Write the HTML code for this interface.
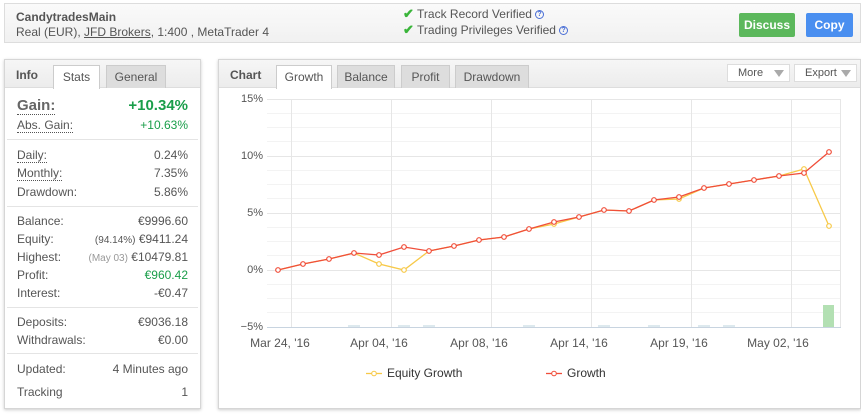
<!DOCTYPE html>
<html><head><meta charset="utf-8"><style>
*{box-sizing:border-box;margin:0;padding:0}
body{width:861px;height:415px;background:#fff;font-family:"Liberation Sans",sans-serif;font-size:12px;color:#555;position:relative;overflow:hidden}
.abs{position:absolute}
.hdr{left:4px;top:3px;width:857px;height:40px;border:1px solid #ddd;background:linear-gradient(#fafafa,#f1f1f1)}
.btn{position:absolute;top:9px;height:24px;color:#fff;font-weight:bold;font-size:12px;line-height:24px;text-align:center;border-radius:2px}
.panel{border:1px solid #d6d6d6;background:#fff;box-shadow:0 1px 3px #ccc}
.ph{height:28px;background:linear-gradient(#f6f6f6,#ececec);border-bottom:1px solid #ddd;position:relative}
.tab{position:absolute;top:5px;height:23px;line-height:22px;text-align:center;font-size:12px;color:#555;background:#ddd;border:1px solid #ccc;border-bottom:none}
.tab.on{background:#fff;height:24px}
.row{position:absolute;left:17px;width:171px;font-size:12px;color:#555;display:flex;justify-content:space-between}
.dot{border-bottom:1px dotted #555}
.sep{position:absolute;left:7px;width:191px;border-top:1px solid #e4e4e4}
.dd{position:absolute;top:4px;height:18px;background:#fff;border:1px solid #ddd;font-size:11px;line-height:16px;padding-left:10px;color:#555}
.dd:after{content:"";position:absolute;right:5px;top:5px;border:5px solid transparent;border-top:7px solid #aaa;border-bottom:none}
.yl{position:absolute;right:598px;font-size:11px;color:#555}
.xl{position:absolute;top:336px;font-size:12px;color:#555;width:80px;text-align:center}
.q{display:inline-block;width:9px;height:9px;border:1px solid #4a6fd6;border-radius:50%;color:#4a6fd6;font-size:7px;line-height:7px;text-align:center;font-weight:bold;vertical-align:middle;margin-left:3px}
.ck{color:#3ab53a;font-weight:bold;font-size:13px}
</style></head><body>
<div class="abs hdr">
 <div class="abs" style="left:11px;top:6px;font-size:12px;font-weight:bold;color:#555">CandytradesMain</div>
 <div class="abs" style="left:11px;top:21px;font-size:12px;color:#555">Real (EUR), <span style="text-decoration:underline">JFD Brokers</span>, 1:400 , MetaTrader 4</div>
 <div class="abs" style="left:398px;top:2px;font-size:12px;color:#555"><span class="ck">✔</span> Track Record Verified<span class="q">?</span></div>
 <div class="abs" style="left:398px;top:18px;font-size:12px;color:#555"><span class="ck">✔</span> Trading Privileges Verified<span class="q">?</span></div>
 <div class="btn" style="left:734px;width:56px;background:#5cb85c">Discuss</div>
 <div class="btn" style="left:801px;width:47px;background:#4a8ff0">Copy</div>
</div>

<div class="abs panel" style="left:4px;top:59px;width:197px;height:350px">
 <div class="ph">
  <div class="abs" style="left:11px;top:8px;font-weight:bold;font-size:12px;color:#555">Info</div>
  <div class="tab on" style="left:48px;width:47px">Stats</div>
  <div class="tab" style="left:101px;width:60px">General</div>
 </div>
</div>
<div class="row" style="top:97px;font-size:15px;font-weight:bold"><span class="dot" style="color:#666">Gain:</span><span style="color:#1a9e4a">+10.34%</span></div>
<div class="row" style="top:118px"><span class="dot">Abs. Gain:</span><span style="color:#1a9e4a">+10.63%</span></div>
<div class="sep" style="top:139px"></div>
<div class="row" style="top:148px"><span class="dot">Daily:</span><span>0.24%</span></div>
<div class="row" style="top:166px"><span class="dot">Monthly:</span><span>7.35%</span></div>
<div class="row" style="top:185px"><span>Drawdown:</span><span>5.86%</span></div>
<div class="sep" style="top:206px"></div>
<div class="row" style="top:214px"><span>Balance:</span><span>€9996.60</span></div>
<div class="row" style="top:232px"><span>Equity:</span><span><span style="font-size:10px">(94.14%)</span> €9411.24</span></div>
<div class="row" style="top:250px"><span>Highest:</span><span><span style="font-size:10px;color:#999">(May 03)</span> €10479.81</span></div>
<div class="row" style="top:268px"><span>Profit:</span><span style="color:#1a9e4a">€960.42</span></div>
<div class="row" style="top:286px"><span>Interest:</span><span>-€0.47</span></div>
<div class="sep" style="top:307px"></div>
<div class="row" style="top:315px"><span>Deposits:</span><span>€9036.18</span></div>
<div class="row" style="top:333px"><span>Withdrawals:</span><span>€0.00</span></div>
<div class="sep" style="top:353px"></div>
<div class="row" style="top:362px"><span>Updated:</span><span>4 Minutes ago</span></div>
<div class="row" style="top:385px"><span>Tracking</span><span>1</span></div>

<div class="abs panel" style="left:218px;top:59px;width:643px;height:350px">
 <div class="ph">
  <div class="abs" style="left:11px;top:8px;font-weight:bold;font-size:12px;color:#555">Chart</div>
  <div class="tab on" style="left:57px;width:56px">Growth</div>
  <div class="tab" style="left:118px;width:58px">Balance</div>
  <div class="tab" style="left:182px;width:49px">Profit</div>
  <div class="tab" style="left:236px;width:74px">Drawdown</div>
  <div class="dd" style="left:508px;width:63px">More</div>
  <div class="dd" style="left:575px;width:63px">Export</div>
 </div>
</div>
<div class="yl" style="top:93px">15%</div>
<div class="yl" style="top:150px">10%</div>
<div class="yl" style="top:207px">5%</div>
<div class="yl" style="top:264px">0%</div>
<div class="yl" style="top:321px">−5%</div>
<svg class="abs" style="left:0;top:0" width="861" height="415">
 <g stroke="#f3f3f3" stroke-width="1">
  <path d="M267 113.5H840M267 127.5H840M267 141.5H840M267 170.5H840M267 184.5H840M267 198.5H840M267 227.5H840M267 241.5H840M267 255.5H840M267 284.5H840M267 298.5H840M267 312.5H840"/>
 </g>
 <g stroke="#e6e6e6" stroke-width="1" fill="none">
  <path d="M267 99.5H840M267 156.5H840M267 213.5H840M267 270.5H840"/>
  <path d="M291.5 99V327M391.5 99V327M491.5 99V327M591.5 99V327M691.5 99V327M791.5 99V327M840.5 99V327"/>
 </g>
 <path d="M267 327.5H841" stroke="#c8d4e0"/>
 <g fill="#dde9ee"><rect x="348" y="325" width="12" height="2"/><rect x="398" y="325" width="12" height="2"/><rect x="423" y="325" width="12" height="2"/><rect x="523" y="325" width="12" height="2"/><rect x="598" y="325" width="12" height="2"/><rect x="648" y="325" width="12" height="2"/><rect x="698" y="325" width="12" height="2"/><rect x="723" y="325" width="12" height="2"/></g>
 <rect x="823" y="305" width="11" height="22" fill="#b3e0b3"/>
 <polyline fill="none" stroke="#f7c948" stroke-width="1.3" points="278,270 303,264 329,259 354,253 379,264 404,270 429,251 454,246 479,240 504,237 529,229 554,224 579,217 604,210 629,211 654,200 679,199 704,188 729,184 754,180 779,176 804,169 829,226"/>
 <g fill="#fff" stroke="#f7c948" stroke-width="1.2">
  <circle cx="379" cy="264" r="2.3"/><circle cx="404" cy="270" r="2.3"/><circle cx="554" cy="224" r="2.3"/><circle cx="679" cy="199" r="2.3"/><circle cx="804" cy="169" r="2.3"/><circle cx="829" cy="226" r="2.3"/>
 </g>
 <polyline fill="none" stroke="#f04e3a" stroke-width="1.3" points="278,270 303,264 329,259 354,253 379,255 404,247 429,251 454,246 479,240 504,237 529,229 554,222 579,217 604,210 629,211 654,200 679,197 704,188 729,184 754,180 779,176 804,173 829,152"/>
 <g fill="#fff" stroke="#f04e3a" stroke-width="1.2">
  <circle cx="278" cy="270" r="2.3"/><circle cx="303" cy="264" r="2.3"/><circle cx="329" cy="259" r="2.3"/><circle cx="354" cy="253" r="2.3"/><circle cx="379" cy="255" r="2.3"/><circle cx="404" cy="247" r="2.3"/><circle cx="429" cy="251" r="2.3"/><circle cx="454" cy="246" r="2.3"/><circle cx="479" cy="240" r="2.3"/><circle cx="504" cy="237" r="2.3"/><circle cx="529" cy="229" r="2.3"/><circle cx="554" cy="222" r="2.3"/><circle cx="579" cy="217" r="2.3"/><circle cx="604" cy="210" r="2.3"/><circle cx="629" cy="211" r="2.3"/><circle cx="654" cy="200" r="2.3"/><circle cx="679" cy="197" r="2.3"/><circle cx="704" cy="188" r="2.3"/><circle cx="729" cy="184" r="2.3"/><circle cx="754" cy="180" r="2.3"/><circle cx="779" cy="176" r="2.3"/><circle cx="804" cy="173" r="2.3"/><circle cx="829" cy="152" r="2.3"/>
 </g>
 <path d="M366 373.5H382" stroke="#f7c948" stroke-width="1.3"/><circle cx="374" cy="373.5" r="2.3" fill="#fff" stroke="#f7c948"/>
 <path d="M546 373.5H562" stroke="#f04e3a" stroke-width="1.3"/><circle cx="554" cy="373.5" r="2.3" fill="#fff" stroke="#f04e3a"/>
</svg>
<div class="xl" style="left:240px">Mar 24, '16</div>
<div class="xl" style="left:339px">Apr 04, '16</div>
<div class="xl" style="left:439px">Apr 08, '16</div>
<div class="xl" style="left:539px">Apr 14, '16</div>
<div class="xl" style="left:639px">Apr 19, '16</div>
<div class="xl" style="left:738px">May 02, '16</div>
<div class="abs" style="left:387px;top:366px;font-size:12px;color:#333">Equity Growth</div>
<div class="abs" style="left:567px;top:366px;font-size:12px;color:#333">Growth</div>
</body></html>
